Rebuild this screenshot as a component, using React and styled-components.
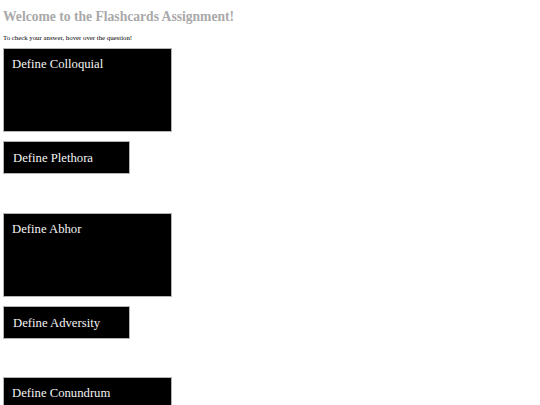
import React from 'react'
import styled, {createGlobalStyle} from 'styled-components'

const GlobalStyle = createGlobalStyle`
  body {
    margin: 3px;
    background: #ffffff;
    font-family: "Liberation Serif", "Times New Roman", serif;
  }
`;

const Title = styled.h1`
  margin: 6px 0 0 0;
  font-size: 13.6px;
  line-height: 16px;
  font-weight: bold;
  color: #a9a9a9;
`;

const Hint = styled.p`
  margin: 9px 0 0 0;
  font-size: 6.8px;
  line-height: 8px;
  color: #000;
`;

const Deck = styled.div`
  display: flex;
  flex-direction: column;
  align-items: flex-start;
  margin-top: 6px;
`;

const Card = styled.div`
  box-sizing: border-box;
  background: #000;
  border: 1px solid #b4b4b4;
  color: #f4f4f4;
  font-size: 12.7px;
  line-height: 15px;
  width: ${props => props.small ? '127px' : '169px'};
  height: ${props => props.small ? '33px' : '84px'};
  padding: ${props => props.small ? '9px 0 0 9px' : '8px 0 0 8px'};
  margin-bottom: ${props => props.small ? '38.5px' : '9px'};
`;

const words = ['Colloquial', 'Plethora', 'Abhor', 'Adversity', 'Conundrum'];

const App = () => {
    return (
        <div>
            <GlobalStyle />
            <Title>Welcome to the Flashcards Assignment!</Title>
            <Hint>To check your answer, hover over the question!</Hint>
            <Deck>
                {words.map((word, index) => (
                    <Card small={index % 2 === 1} key={word}>Define {word}</Card>
                ))}
            </Deck>
        </div>
    )
}

export default App;
